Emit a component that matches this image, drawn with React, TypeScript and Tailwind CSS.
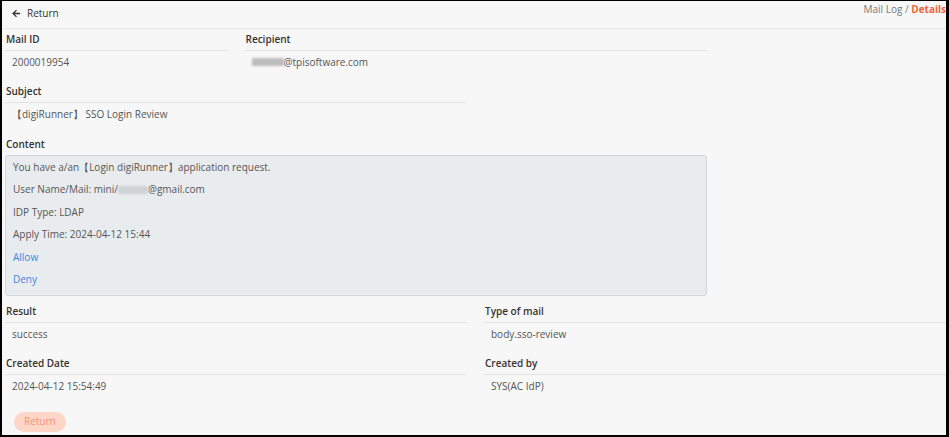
import React from 'react';

const FONT = "font-['Open_Sans','Noto_Sans',sans-serif]";

const Blur = ({ w, tone }: { w: string; tone: string }) => (
  <span className={`inline-block align-middle h-[8px] rounded-[1px] blur-[1px] ${w} ${tone}`} />
);

const Field = ({
  label,
  span,
  children,
}: {
  label: string;
  span: string;
  children: React.ReactNode;
}) => (
  <div className={`${span} mb-[8px]`}>
    <div className="h-[22px] flex items-center border-b border-[#e3e3e3] pl-[1px] text-[10px] font-semibold text-[#35332f]">
      {label}
    </div>
    <div className="h-[22px] flex items-center pl-[7px] text-[10px] text-[#555]">{children}</div>
  </div>
);

export default function App() {
  return (
    <div
      className={`${FONT} h-[437px] w-[949px] overflow-hidden bg-[#f7f7f7] border-black border-t border-l-2 border-r-[3px] border-b-2`}
    >
      {/* Header */}
      <div className="h-[28px] flex justify-between border-b border-[#e6e6e6] ml-[3px]">
        <div className="flex items-center gap-[6px] h-[14px] mt-[5px] pl-[7px] text-[10px] text-[#333]">
          <svg width="9" height="9" viewBox="0 0 10 10" fill="none" stroke="#333" strokeWidth="1.4">
            <path d="M9 5H1.5M5 1.2L1.2 5L5 8.8" />
          </svg>
          <span>Return</span>
        </div>
        <div className="h-[14px] mt-[1px] flex items-center text-[10px] text-[#777]">
          <span>Mail Log /&nbsp;</span>
          <span className="font-bold text-[#f0663c]">Details</span>
        </div>
      </div>

      {/* Detail grid */}
      <div className="grid grid-cols-12 gap-x-[17px] pl-[3px]">
        <Field label="Mail ID" span="col-span-3">
          2000019954
        </Field>
        <Field label="Recipient" span="col-span-6">
          <Blur w="w-[32px]" tone="bg-[#bdbdbd]" />
          <span>@tpisoftware.com</span>
        </Field>
        <div className="col-span-3" />

        <Field label="Subject" span="col-span-6">
          【digiRunner】 SSO Login Review
        </Field>
        <div className="col-span-6" />

        <div className="col-span-9 mb-[5px]">
          <div className="h-[22px] flex items-center pl-[1px] text-[10px] font-semibold text-[#35332f]">
            Content
          </div>
          <div className="bg-[#e9ecef] border border-[#d4d7da] rounded-[3px] pl-[7px] pb-[5px] text-[10px] text-[#555] leading-[22.4px]">
            <div>You have a/an【Login digiRunner】application request.</div>
            <div className="flex items-center">
              <span>User Name/Mail: mini/</span>
              <Blur w="w-[30px]" tone="bg-[#cfd2d5]" />
              <span>@gmail.com</span>
            </div>
            <div>IDP Type: LDAP</div>
            <div>Apply Time: 2024-04-12 15:44</div>
            <div className="text-[#3d86e0]">Allow</div>
            <div className="text-[#3d86e0]">Deny</div>
          </div>
        </div>
        <div className="col-span-3" />

        <Field label="Result" span="col-span-6">
          success
        </Field>
        <Field label="Type of mail" span="col-span-6">
          body.sso-review
        </Field>

        <Field label="Created Date" span="col-span-6">
          2024-04-12 15:54:49
        </Field>
        <Field label="Created by" span="col-span-6">
          SYS(AC IdP)
        </Field>
      </div>

      <div className="pl-[12px] mt-[2px]">
        <button className="h-[20px] px-[10px] rounded-full bg-[#fdd6c8] text-[10px] text-[#f0947a]">
          Return
        </button>
      </div>
    </div>
  );
}
